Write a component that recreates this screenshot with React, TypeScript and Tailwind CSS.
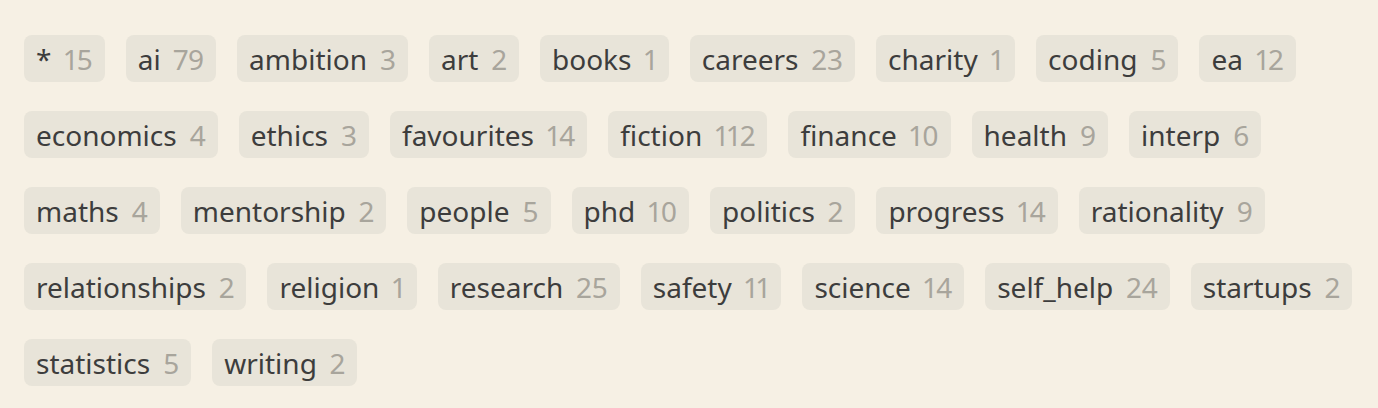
const TAGS: [string, number][] = [
  ['*', 15], ['ai', 79], ['ambition', 3], ['art', 2], ['books', 1], ['careers', 23], ['charity', 1], ['coding', 5], ['ea', 12],
  ['economics', 4], ['ethics', 3], ['favourites', 14], ['fiction', 112], ['finance', 10], ['health', 9], ['interp', 6],
  ['maths', 4], ['mentorship', 2], ['people', 5], ['phd', 10], ['politics', 2], ['progress', 14], ['rationality', 9],
  ['relationships', 2], ['religion', 1], ['research', 25], ['safety', 11], ['science', 14], ['self_help', 24], ['startups', 2],
  ['statistics', 5], ['writing', 2],
];

export default function App() {
  return (
    <div className="min-h-[408px] bg-[#f6f0e4] px-6 pt-[35px] font-['Noto_Sans',sans-serif]">
      <div className="flex flex-wrap gap-x-[21px] gap-y-[29px]">
        {TAGS.map(([name, count]) => (
          <a
            key={name}
            href="#"
            className="flex h-[47px] items-center gap-[13px] rounded-lg bg-[#e8e4d9] px-3 text-[28px] leading-none proportional-nums"
          >
            <span className="text-[#3d3d3d]">{name}</span>
            <span className="text-[#a8a59c]">{count}</span>
          </a>
        ))}
      </div>
    </div>
  );
}
